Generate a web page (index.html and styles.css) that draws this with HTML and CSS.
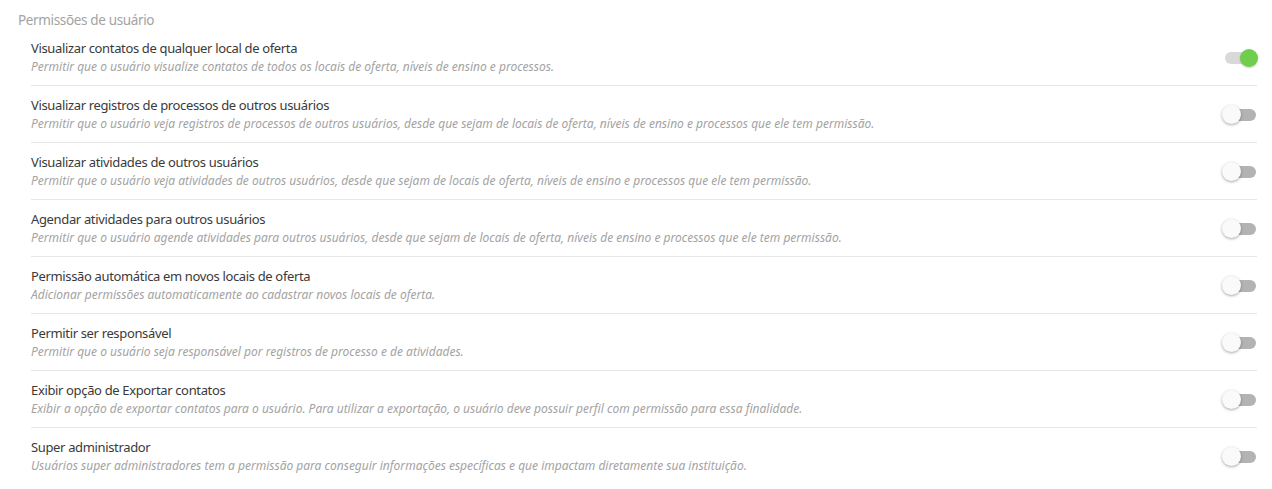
FILE: index.html
```html
<!DOCTYPE html>
<html lang="pt-BR">

<head>
    <meta charset="UTF-8">
    <meta name="viewport" content="width=device-width, initial-scale=1.0">
    <title>Permissões de usuário</title>
    <link rel="stylesheet" href="styles.css">
</head>

<body>
    <section class="permissions">
        <h2 class="permissions-title">Permissões de usuário</h2>
        <ul class="permission-list">
            <li class="permission">
                <div class="permission-text">
                    <span class="permission-name">Visualizar contatos de qualquer local de oferta</span>
                    <span class="permission-desc">Permitir que o usuário visualize contatos de todos os locais de oferta, níveis de ensino e processos.</span>
                </div>
                <label class="switch"><input type="checkbox" checked><span class="slider"></span></label>
            </li>
            <li class="permission">
                <div class="permission-text">
                    <span class="permission-name">Visualizar registros de processos de outros usuários</span>
                    <span class="permission-desc">Permitir que o usuário veja registros de processos de outros usuários, desde que sejam de locais de oferta, níveis de ensino e processos que ele tem permissão.</span>
                </div>
                <label class="switch"><input type="checkbox"><span class="slider"></span></label>
            </li>
            <li class="permission">
                <div class="permission-text">
                    <span class="permission-name">Visualizar atividades de outros usuários</span>
                    <span class="permission-desc">Permitir que o usuário veja atividades de outros usuários, desde que sejam de locais de oferta, níveis de ensino e processos que ele tem permissão.</span>
                </div>
                <label class="switch"><input type="checkbox"><span class="slider"></span></label>
            </li>
            <li class="permission">
                <div class="permission-text">
                    <span class="permission-name">Agendar atividades para outros usuários</span>
                    <span class="permission-desc">Permitir que o usuário agende atividades para outros usuários, desde que sejam de locais de oferta, níveis de ensino e processos que ele tem permissão.</span>
                </div>
                <label class="switch"><input type="checkbox"><span class="slider"></span></label>
            </li>
            <li class="permission">
                <div class="permission-text">
                    <span class="permission-name">Permissão automática em novos locais de oferta</span>
                    <span class="permission-desc">Adicionar permissões automaticamente ao cadastrar novos locais de oferta.</span>
                </div>
                <label class="switch"><input type="checkbox"><span class="slider"></span></label>
            </li>
            <li class="permission">
                <div class="permission-text">
                    <span class="permission-name">Permitir ser responsável</span>
                    <span class="permission-desc">Permitir que o usuário seja responsável por registros de processo e de atividades.</span>
                </div>
                <label class="switch"><input type="checkbox"><span class="slider"></span></label>
            </li>
            <li class="permission">
                <div class="permission-text">
                    <span class="permission-name">Exibir opção de Exportar contatos</span>
                    <span class="permission-desc">Exibir a opção de exportar contatos para o usuário. Para utilizar a exportação, o usuário deve possuir perfil com permissão para essa finalidade.</span>
                </div>
                <label class="switch"><input type="checkbox"><span class="slider"></span></label>
            </li>
            <li class="permission">
                <div class="permission-text">
                    <span class="permission-name">Super administrador</span>
                    <span class="permission-desc">Usuários super administradores tem a permissão para conseguir informações específicas e que impactam diretamente sua instituição.</span>
                </div>
                <label class="switch"><input type="checkbox"><span class="slider"></span></label>
            </li>
        </ul>
    </section>
</body>

</html>
```

FILE: styles.css
```css
body {
    font-family: "Noto Sans", Arial, sans-serif;
    background-color: #fff;
    margin: 0;
    padding: 0;
}

.permissions {
    padding: 11px 15px 0 18px;
}

.permissions-title {
    margin: 0;
    font-size: 13.5px;
    font-weight: normal;
    letter-spacing: -0.35px;
    line-height: 18px;
    color: #a3a3a3;
}

.permission-list {
    list-style-type: none;
    margin: 0 0 0 13px;
    padding: 0;
}

.permission {
    display: flex;
    align-items: center;
    justify-content: space-between;
    padding: 10px 0 8px;
    border-bottom: 1px solid #e6e6e6;
}

.permission:last-child {
    border-bottom: none;
}

.permission-text {
    display: flex;
    flex-direction: column;
}

.permission-name {
    font-size: 13px;
    letter-spacing: -0.35px;
    line-height: 18px;
    color: #3a3a3a;
}

.permission-desc {
    font-size: 12px;
    font-style: italic;
    line-height: 20px;
    color: #a3a3a3;
}

/* interruptor */
.switch {
    position: relative;
    display: inline-block;
    width: 32px;
    height: 20px;
    margin-right: 1px;
}

.switch input {
    display: none;
}

.slider {
    position: absolute;
    left: 1px;
    right: 0;
    top: 4px;
    height: 12px;
    border-radius: 6px;
    background-color: #b3b3b3;
    cursor: pointer;
}

.slider::before {
    content: "";
    position: absolute;
    left: -3px;
    top: -4px;
    width: 19px;
    height: 19px;
    border-radius: 50%;
    background-color: #fafafa;
    box-shadow: 0 1px 3px rgba(0, 0, 0, 0.35);
}

.switch input:checked + .slider {
    background-color: #d9d9d9;
}

.switch input:checked + .slider::before {
    left: auto;
    right: -2px;
    top: -3px;
    width: 18px;
    height: 18px;
    background-color: #6fcf4c;
    box-shadow: 0 1px 2px rgba(0, 0, 0, 0.2);
}
```
